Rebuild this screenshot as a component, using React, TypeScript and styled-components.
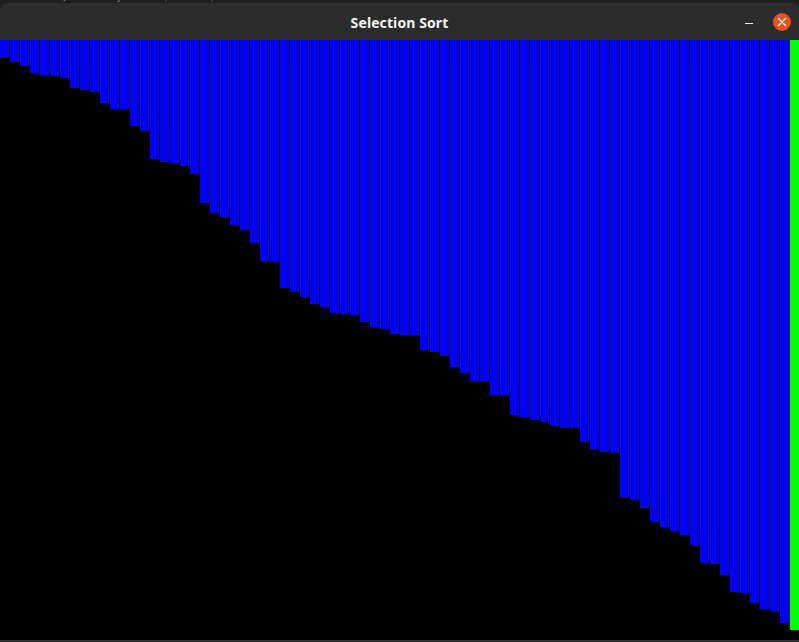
import React from 'react';
import styled, { createGlobalStyle } from 'styled-components';

// blue bar bottoms (page y) measured from the frame; canvas starts at y=40
const bottoms = [
    57, 62, 66, 73, 75, 76, 78, 88, 90, 92, 103, 109, 109, 126, 131, 159, 162, 163, 166, 174,
    203, 213, 217, 225, 230, 243, 261, 262, 288, 292, 297, 304, 307, 313, 314, 315, 322, 327, 329, 334,
    335, 335, 350, 352, 356, 367, 373, 381, 381, 395, 395, 415, 417, 420, 422, 426, 428, 428, 442, 449,
    452, 453, 497, 500, 508, 522, 527, 531, 535, 545, 563, 564, 575, 592, 593, 603, 609, 611, 623, 630,
];
const CANVAS_TOP = 40;
const CURRENT = bottoms.length - 1;

const GlobalStyle = createGlobalStyle`
    html, body {
        margin: 0;
        padding: 0;
        background: #1e1e1e;
        overflow: hidden;
    }
`;

const Desktop = styled.div`
    width: 799px;
    height: 642px;
    display: flex;
    flex-direction: column;
    background: #1e1e1e;
    overflow: hidden;
`;

const TerminalStrip = styled.div<{ $height: number; $shift: number }>`
    height: ${(p) => p.$height}px;
    overflow: hidden;
    flex-shrink: 0;
    & > span {
        display: block;
        margin-top: ${(p) => p.$shift}px;
        padding-left: 30px;
        font-family: 'DejaVu Sans Mono', monospace;
        font-size: 11px;
        line-height: 12px;
        color: #8a8a8a;
        white-space: pre;
    }
`;

const Window = styled.div`
    display: flex;
    flex-direction: column;
    flex-shrink: 0;
`;

const TitleBar = styled.div`
    height: 37px;
    background: #2c2c2c;
    border-radius: 7px 7px 0 0;
    display: grid;
    grid-template-columns: 1fr auto 1fr;
    align-items: center;
    font-family: 'Noto Sans', 'DejaVu Sans', sans-serif;
`;

const Title = styled.div`
    grid-column: 2;
    color: #f2f2f2;
    font-size: 14px;
    font-weight: 700;
    letter-spacing: 0.1px;
    padding-top: 1px;
`;

const Controls = styled.div`
    grid-column: 3;
    justify-self: end;
    display: flex;
    align-items: center;
    gap: 20px;
    padding-right: 8px;
`;

const Minimize = styled.div`
    width: 8px;
    height: 1.5px;
    background: #eeeeee;
    margin-top: 4px;
`;

const Close = styled.div`
    width: 18px;
    height: 18px;
    border-radius: 50%;
    background: #e2531f;
    display: flex;
    align-items: center;
    justify-content: center;
`;

const Canvas = styled.div`
    width: 799px;
    height: 600px;
    background: #000;
    display: flex;
    align-items: flex-start;
    overflow: hidden;
`;

const Bar = styled.div<{ $active: boolean }>`
    flex: 0 0 9px;
    margin-right: 1px;
    background: ${(p) => (p.$active ? '#00ff00' : '#0000ff')};
`;

const BottomEdge = styled.div`
    height: 1px;
    background: #3a3a3a;
    flex-shrink: 0;
`;

export default function App() {
    return (
        <>
            <GlobalStyle />
            <Desktop>
                <TerminalStrip $height={3} $shift={-9}>
                    <span>{'    ~/   ~  Py   ~ C$C    ~$  '}</span>
                </TerminalStrip>
                <Window>
                    <TitleBar>
                        <Title>Selection Sort</Title>
                        <Controls>
                            <Minimize />
                            <Close>
                                <svg width="10" height="10" viewBox="0 0 10 10">
                                    <path
                                        d="M1.5 1.5 L8.5 8.5 M8.5 1.5 L1.5 8.5"
                                        stroke="#fff"
                                        strokeWidth="1.4"
                                        strokeLinecap="round"
                                    />
                                </svg>
                            </Close>
                        </Controls>
                    </TitleBar>
                    <Canvas>
                        {bottoms.map((b, i) => (
                            <Bar
                                key={i}
                                $active={i === CURRENT}
                                style={{ height: b - CANVAS_TOP }}
                            />
                        ))}
                    </Canvas>
                </Window>
                <BottomEdge />
                <TerminalStrip $height={1} $shift={0}>
                    <span>{'sa  mpl   s-sort  py  Selection  sort  algorithm  visualiz  ation  step'}</span>
                </TerminalStrip>
            </Desktop>
        </>
    );
}
